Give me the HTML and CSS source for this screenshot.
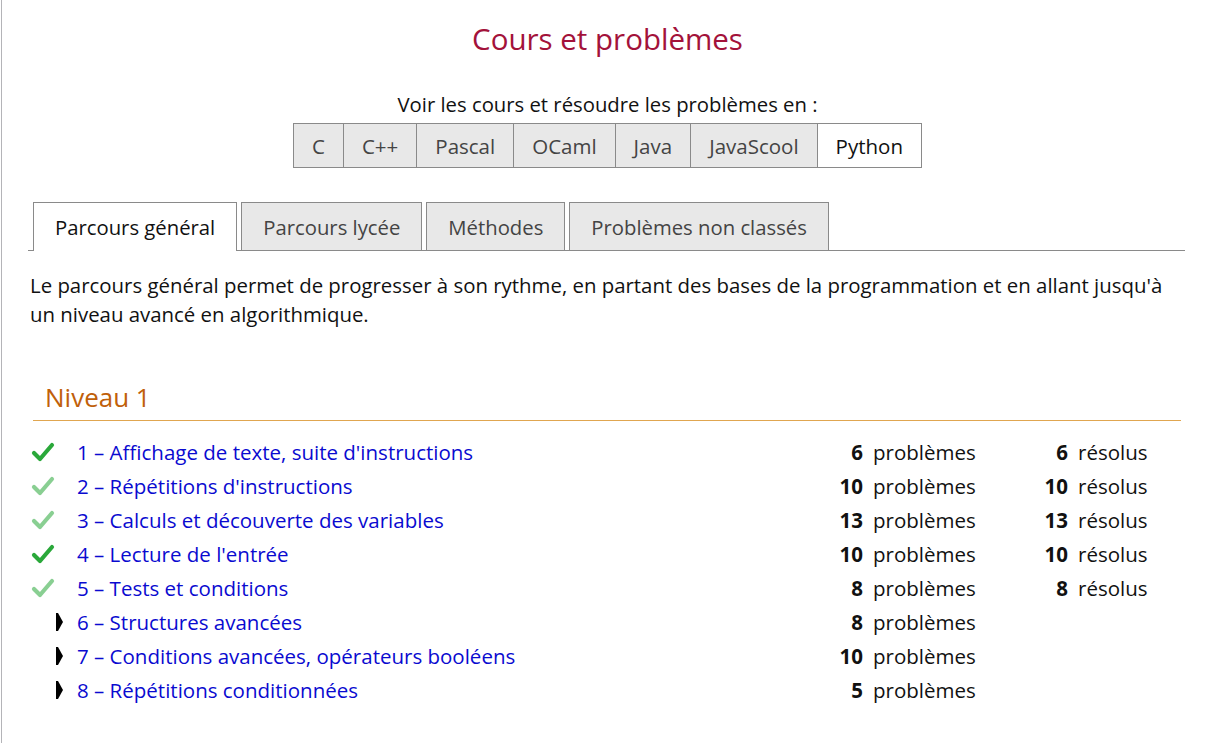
FILE: index.html
```html
<!DOCTYPE html>
<html lang="fr">
<head>
<meta charset="utf-8">
<title>Cours et problèmes</title>
<link rel="stylesheet" href="styles.css">
</head>
<body>
<div class="page">
  <h1 class="title">Cours et problèmes</h1>
  <p class="lang-intro">Voir les cours et résoudre les problèmes en :</p>
  <div class="langs">
    <span class="lang">C</span>
    <span class="lang">C++</span>
    <span class="lang">Pascal</span>
    <span class="lang">OCaml</span>
    <span class="lang">Java</span>
    <span class="lang">JavaScool</span>
    <span class="lang active">Python</span>
  </div>
  <div class="tabs">
    <span class="tab active">Parcours général</span>
    <span class="tab">Parcours lycée</span>
    <span class="tab">Méthodes</span>
    <span class="tab">Problèmes non classés</span>
  </div>
  <p class="desc">Le parcours général permet de progresser à son rythme, en partant des bases de la programmation et en allant jusqu'à un niveau avancé en algorithmique.</p>
  <h2 class="level">Niveau 1</h2>
  <div class="chapters">
    <span class="ico"><svg class="check" width="24" height="22" viewBox="0 0 24 22"><path d="M3 12 L9 18 L21 4" fill="none" stroke="#2aa83a" stroke-width="4.2" stroke-linecap="round" stroke-linejoin="round"/></svg></span>
    <a class="name" href="#">1 – Affichage de texte, suite d'instructions</a>
    <span class="num">6</span><span class="word">problèmes</span>
    <span class="num">6</span><span class="word">résolus</span>

    <span class="ico"><svg class="check light" width="24" height="22" viewBox="0 0 24 22"><path d="M3 12 L9 18 L21 4" fill="none" stroke="#2aa83a" stroke-width="4.2" stroke-linecap="round" stroke-linejoin="round"/></svg></span>
    <a class="name" href="#">2 – Répétitions d'instructions</a>
    <span class="num">10</span><span class="word">problèmes</span>
    <span class="num">10</span><span class="word">résolus</span>

    <span class="ico"><svg class="check light" width="24" height="22" viewBox="0 0 24 22"><path d="M3 12 L9 18 L21 4" fill="none" stroke="#2aa83a" stroke-width="4.2" stroke-linecap="round" stroke-linejoin="round"/></svg></span>
    <a class="name" href="#">3 – Calculs et découverte des variables</a>
    <span class="num">13</span><span class="word">problèmes</span>
    <span class="num">13</span><span class="word">résolus</span>

    <span class="ico"><svg class="check" width="24" height="22" viewBox="0 0 24 22"><path d="M3 12 L9 18 L21 4" fill="none" stroke="#2aa83a" stroke-width="4.2" stroke-linecap="round" stroke-linejoin="round"/></svg></span>
    <a class="name" href="#">4 – Lecture de l'entrée</a>
    <span class="num">10</span><span class="word">problèmes</span>
    <span class="num">10</span><span class="word">résolus</span>

    <span class="ico"><svg class="check light" width="24" height="22" viewBox="0 0 24 22"><path d="M3 12 L9 18 L21 4" fill="none" stroke="#2aa83a" stroke-width="4.2" stroke-linecap="round" stroke-linejoin="round"/></svg></span>
    <a class="name" href="#">5 – Tests et conditions</a>
    <span class="num">8</span><span class="word">problèmes</span>
    <span class="num">8</span><span class="word">résolus</span>

    <span class="ico"><svg class="tri" width="8" height="18" viewBox="0 0 8 18"><polygon points="0,0 2,0 7,9 2,18 0,18" fill="#000"/></svg></span>
    <a class="name" href="#">6 – Structures avancées</a>
    <span class="num">8</span><span class="word">problèmes</span>
    <span class="num"></span><span class="word"></span>

    <span class="ico"><svg class="tri" width="8" height="18" viewBox="0 0 8 18"><polygon points="0,0 2,0 7,9 2,18 0,18" fill="#000"/></svg></span>
    <a class="name" href="#">7 – Conditions avancées, opérateurs booléens</a>
    <span class="num">10</span><span class="word">problèmes</span>
    <span class="num"></span><span class="word"></span>

    <span class="ico"><svg class="tri" width="8" height="18" viewBox="0 0 8 18"><polygon points="0,0 2,0 7,9 2,18 0,18" fill="#000"/></svg></span>
    <a class="name" href="#">8 – Répétitions conditionnées</a>
    <span class="num">5</span><span class="word">problèmes</span>
    <span class="num"></span><span class="word"></span>
  </div>
</div>
</body>
</html>
```
FILE: styles.css
```css
html, body {
  margin: 0;
  padding: 0;
  background: #fff;
}
body {
  font-family: "Open Sans", "Noto Sans", "Liberation Sans", sans-serif;
  color: #111;
}
.page {
  margin-left: 1px;
  border-left: 1px solid #b4b4b8;
  padding: 20px 27px 30px 28px;
  min-height: 700px;
}
.title {
  margin: 0;
  text-align: center;
  font-family: "Open Sans", "Noto Sans", sans-serif;
  font-weight: 400;
  font-size: 29.5px;
  line-height: 38px;
  color: #a3123a;
}
.lang-intro {
  margin: 33px 0 0;
  text-align: center;
  font-size: 20.3px;
  line-height: 26px;
  color: #111;
}
.langs {
  display: flex;
  justify-content: center;
  margin-top: 6px;
}
.lang {
  display: flex;
  align-items: center;
  justify-content: center;
  height: 43px;
  border: 1px solid #8a8a8a;
  border-left: none;
  background: #e8e8e8;
  color: #444;
  font-size: 20.5px;
  padding: 0 18px;
}
.lang:first-child {
  border-left: 1px solid #8a8a8a;
}
.lang.active {
  background: #fff;
  color: #111;
}
.tabs {
  display: flex;
  gap: 4px;
  margin-top: 34px;
  padding-left: 5px;
  border-bottom: 1px solid #8a8a8a;
  margin-left: -2px;
}
.tab {
  display: flex;
  align-items: center;
  height: 47px;
  padding: 0 21px;
  border: 1px solid #8a8a8a;
  border-bottom: none;
  background: #e8e8e8;
  color: #444;
  font-size: 20.3px;
  margin-bottom: -1px;
}
.tab.active {
  background: #fff;
  color: #111;
  height: 48px;
}
.desc {
  margin: 20px 0 0;
  font-size: 20.4px;
  line-height: 29px;
  color: #111;
}
.level {
  margin: 51px 4px 0 3px;
  padding: 0 0 6px 12px;
  border-bottom: 1px solid #e0a650;
  font-family: "Open Sans", "Noto Sans", sans-serif;
  font-weight: 400;
  font-size: 26px;
  line-height: 34px;
  color: #c0600a;
}
.chapters {
  display: grid;
  grid-template-columns: 47px 726px 70px 136px 69px 1fr;
  grid-auto-rows: 34px;
  align-items: center;
  margin-top: 14px;
  font-size: 20.5px;
}
.ico {
  display: flex;
  align-items: center;
}
.check {
  margin-left: 1px;
}
.check.light {
  opacity: 0.55;
}
.tri {
  margin-left: 26px;
}
.name {
  color: #0a0ad0;
  text-decoration: none;
}
.num {
  text-align: right;
  padding-right: 10px;
  font-weight: 700;
}
.word {
  color: #111;
}
```
